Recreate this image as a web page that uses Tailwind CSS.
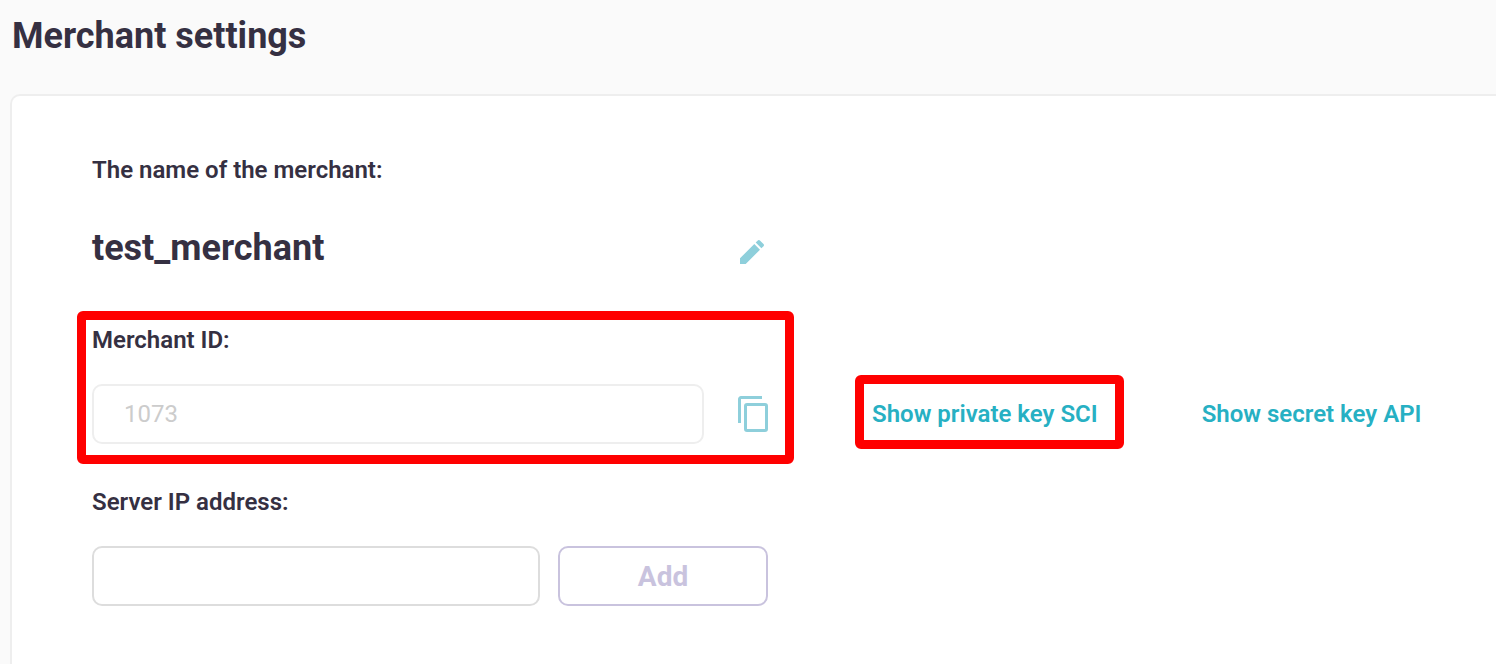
<!DOCTYPE html>
<html lang="en">
<head>
<meta charset="utf-8">
<meta name="viewport" content="width=device-width, initial-scale=1">
<title>Merchant settings</title>
<script src="https://cdn.jsdelivr.net/npm/@tailwindcss/browser@4"></script>
</head>
<body class="flex min-h-screen flex-col overflow-x-hidden bg-[#fafafa] font-[Roboto,sans-serif] text-[#353042]">
<h1 class="px-3 pt-3 text-4xl leading-12 font-bold">Merchant settings</h1>
<main class="mt-[34px] ml-[10px] grow rounded-tl-[10px] border-t-2 border-l-2 border-[#eeeeee] bg-white pt-[60px] pr-12 pb-14 pl-20">
  <p class="text-2xl leading-7 font-semibold">The name of the merchant:</p>
  <div class="mt-[42px] flex max-w-[676px] items-center justify-between">
    <h2 class="text-4xl leading-11 font-bold">test_merchant</h2>
    <button type="button" aria-label="Edit name" class="mt-2 mr-1 text-[#8ecfdb]">
      <svg class="size-6" viewBox="0 0 24 24" fill="currentColor"><path d="M0 18.300V24h5.700L20 9.700l-5.700-5.700zM23.500 6.200a1.500 1.500 0 0 0 0-2.100L19.900.5a1.500 1.500 0 0 0-2.100 0L15.700 2.600l5.700 5.700z"/></svg>
    </button>
  </div>

  <div class="mt-14 flex items-end">
    <div class="relative w-[676px] shrink-0">
      <span class="pointer-events-none absolute -top-[15px] -right-[26px] -bottom-5 -left-[15px] rounded-md border-9 border-[#ff0000]"></span>
      <label for="merchant-id" class="block text-2xl leading-7 font-semibold">Merchant ID:</label>
      <div class="mt-[30px] flex items-center justify-between">
        <input id="merchant-id" type="text" value="1073" readonly class="h-15 w-[612px] rounded-[10px] border-2 border-[#eeeeee] bg-white px-[30px] text-2xl text-[#cccccc]">
        <button type="button" aria-label="Copy merchant ID" class="text-[#8ecfdb]">
          <svg class="h-9 w-[30px]" viewBox="0 0 30 36" fill="none" stroke="currentColor" stroke-width="3"><path d="M1.500 27V3A1.500 1.500 0 0 1 3 1.500H24"/><rect x="7.500" y="8.500" width="21" height="26" rx="1.500"/></svg>
        </button>
      </div>
    </div>
    <div class="relative ml-[104px] flex h-15 items-center">
      <span class="pointer-events-none absolute -top-[9px] -right-[26px] -bottom-[5px] -left-[17px] rounded-md border-9 border-[#ff0000]"></span>
      <a href="#" class="text-2xl leading-7 font-semibold whitespace-nowrap text-[#27b0c3]">Show private key SCI</a>
    </div>
    <div class="ml-[104px] flex h-15 items-center">
      <a href="#" class="text-2xl leading-7 font-semibold whitespace-nowrap text-[#27b0c3]">Show secret key API</a>
    </div>
  </div>

  <form class="mt-11 max-w-[676px]">
    <label for="server-ip" class="block text-2xl leading-7 font-semibold">Server IP address:</label>
    <div class="mt-[30px] flex gap-[18px]">
      <input id="server-ip" type="text" class="h-15 min-w-0 grow rounded-[10px] border-2 border-[#dddddd] bg-white px-[30px] text-2xl">
      <button type="button" class="h-15 w-[210px] rounded-[10px] border-2 border-[#c9c3de] pt-0.5 text-[28px] font-bold text-[#c9c3de]">Add</button>
    </div>
  </form>
</main>
</body>
</html>
